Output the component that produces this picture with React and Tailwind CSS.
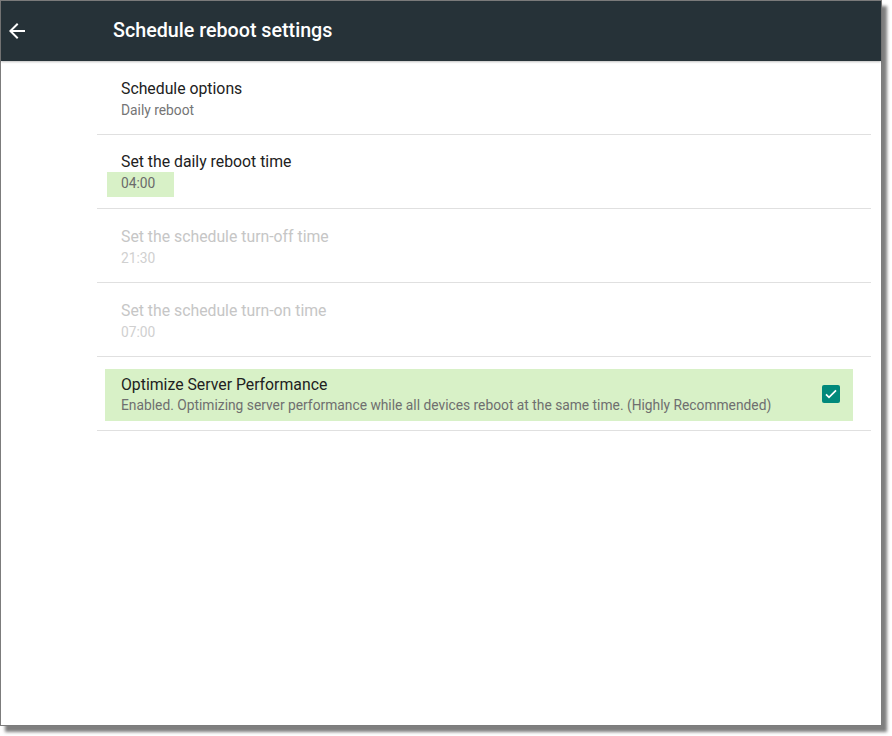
import React from "react";

const rows = [
  { title: "Schedule options", sub: "Daily reboot" },
  { title: "Set the daily reboot time", sub: "04:00", mark: true },
  { title: "Set the schedule turn-off time", sub: "21:30", disabled: true },
  { title: "Set the schedule turn-on time", sub: "07:00", disabled: true },
];

function BackArrow() {
  return (
    <svg width="24" height="24" viewBox="0 0 24 24" fill="white">
      <path d="M20 11H7.83l5.59-5.59L12 4l-8 8 8 8 1.41-1.41L7.83 13H20v-2z" />
    </svg>
  );
}

function Row({ title, sub, mark, disabled }) {
  return (
    <div className="h-[74px] border-b border-[#e0e0e0] flex flex-col justify-center pl-6 pt-[2px]">
      <div
        className={`text-[15.8px] leading-[21px] ${disabled ? "text-[#c6c6c6]" : "text-[#212121]"}`}
      >
        {title}
      </div>
      {mark ? (
        <div className="-ml-[14px] w-[67px] h-[25px] -mb-[2px] bg-[#d8f1c7] pl-[14px] pt-[1px] text-[13.8px] leading-[21px] text-[#6b6b6b]">
          {sub}
        </div>
      ) : (
        <div
          className={`mt-[1px] text-[13.8px] leading-[20px] ${disabled ? "text-[#d0d0d0]" : "text-[#757575]"}`}
        >
          {sub}
        </div>
      )}
    </div>
  );
}

export default function App() {
  return (
    <div className="w-[892px] h-[736px] bg-white" style={{ fontFamily: "Roboto, 'Noto Sans', sans-serif" }}>
      <div className="w-[882px] h-[726px] border border-[#7c7c7c] bg-white flex flex-col shadow-[5px_6px_3px_rgba(0,0,0,0.5)]">
        <div className="h-[60px] bg-[#263238] flex items-center shrink-0 shadow-[0_1px_2px_rgba(0,0,0,0.25)]">
          <div className="ml-[4px] w-[24px] h-[24px] flex items-center justify-center">
            <BackArrow />
          </div>
          <div className="ml-[84px] text-white text-[19.7px] font-medium">
            Schedule reboot settings
          </div>
        </div>
        <div className="ml-[96px] mr-[10px]">
          {rows.map((r) => (
            <Row key={r.title} {...r} />
          ))}
          <div className="h-[74px] border-b border-[#e0e0e0] flex items-center pl-[8px] pr-[18px] pt-[2px]">
            <div className="flex-1 h-[52px] bg-[#d8f1c7] flex items-center pl-4 pr-[13px]">
              <div className="flex-1">
                <div className="text-[15.8px] leading-[21px] text-[#212121]">Optimize Server Performance</div>
                <div className="text-[13.8px] leading-[21px] text-[#6f6f6f]">
                  Enabled. Optimizing server performance while all devices reboot at the same time. (Highly Recommended)
                </div>
              </div>
              <div className="w-[18px] h-[18px] rounded-[2px] bg-[#00897b] flex items-center justify-center -mt-[2px]">
                <svg width="16" height="16" viewBox="0 0 24 24" fill="none" stroke="white" strokeWidth="2.6">
                  <path d="M4.5 12.5l4.5 4.5L19.5 6.5" />
                </svg>
              </div>
            </div>
          </div>
        </div>
      </div>
    </div>
  );
}
